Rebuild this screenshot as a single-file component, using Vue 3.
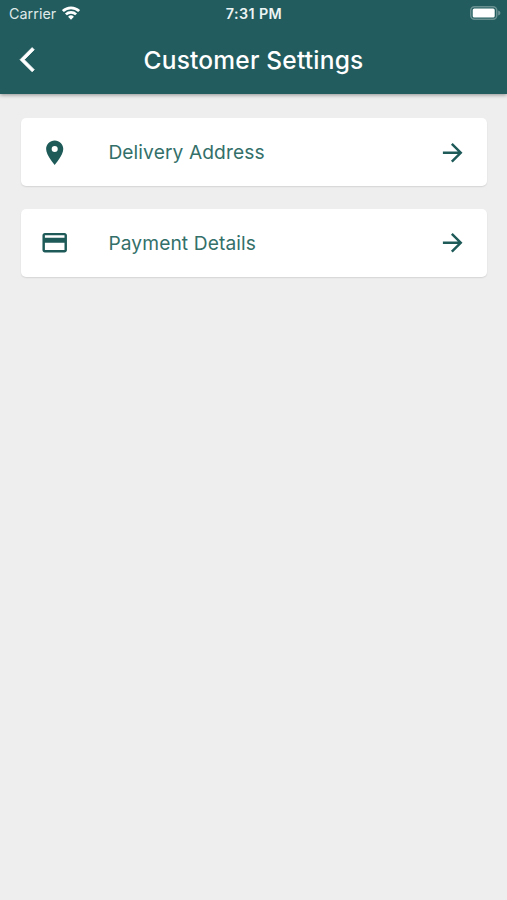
<script setup>
const items = [
  {
    label: 'Delivery Address',
    icon: 'M12 2C8.13 2 5 5.13 5 9c0 5.25 7 13 7 13s7-7.75 7-13c0-3.87-3.13-7-7-7zm0 9.5a2.5 2.5 0 0 1 0-5 2.5 2.5 0 0 1 0 5z',
  },
  {
    label: 'Payment Details',
    icon: 'M20 4H4c-1.11 0-1.99.89-1.99 2L2 18c0 1.11.89 2 2 2h16c1.11 0 2-.89 2-2V6c0-1.11-.89-2-2-2zm0 14H4v-6h16v6zm0-10H4V6h16v2z',
  },
]
</script>

<template>
  <div class="screen">
    <header class="header">
      <div class="status">
        <div class="carrier">
          <span>Carrier</span>
          <svg class="wifi" viewBox="0 0 18 14">
            <g fill="none" stroke="#fff" stroke-width="2.7">
              <path d="M.9 5.1a11.6 11.6 0 0 1 16.2 0" />
              <path d="M3.9 8.4a7.3 7.3 0 0 1 10.2 0" />
            </g>
            <path d="M9 13.7l-2.9-2.9a4.1 4.1 0 0 1 5.8 0z" fill="#fff" />
          </svg>
        </div>
        <time class="time">7:31 PM</time>
        <div class="power">
          <svg class="battery" viewBox="0 0 31 14">
            <rect x=".75" y=".75" width="26" height="12.5" rx="3.8" fill="none" stroke="#fff" stroke-opacity=".32" stroke-width="1.5" />
            <rect x="2.7" y="2.5" width="22" height="9" rx="1.6" fill="#fff" />
            <path d="M28.2 4.6c1.6.5 2.2 1.4 2.2 2.4s-.6 1.9-2.2 2.4z" fill="#fff" fill-opacity=".35" />
          </svg>
        </div>
      </div>
      <div class="bar">
        <button class="back" aria-label="Back">
          <svg viewBox="0 0 24 24"><path d="M11.67 3.87L9.9 2.1 0 12l9.9 9.9 1.77-1.77L3.54 12z" /></svg>
        </button>
        <h1>Customer Settings</h1>
      </div>
    </header>
    <main class="list">
      <a v-for="item in items" :key="item.label" class="card">
        <svg class="icon" viewBox="0 0 24 24"><path :d="item.icon" /></svg>
        <span class="label">{{ item.label }}</span>
        <svg class="icon" viewBox="0 0 24 24">
          <path d="M12 4l-1.41 1.41L16.17 11H4v2h12.17l-5.58 5.59L12 20l8-8z" />
        </svg>
      </a>
    </main>
  </div>
</template>

<style>
body {
  background: #eee;
}
</style>

<style scoped>
.screen {
  min-height: 900px;
  background: #eee;
  font-family: Inter, "Liberation Sans", sans-serif;
  color: #225c5c;
}
.header {
  height: 93.5px;
  box-sizing: border-box;
  background: #225c5e;
  color: #fff;
  box-shadow: 0 1px 4px rgba(0, 0, 0, 0.4);
}
.status {
  display: grid;
  grid-template-columns: 1fr auto 1fr;
  align-items: center;
  height: 27px;
  padding: 0 6px 0 9px;
}
.carrier {
  display: flex;
  align-items: center;
  gap: 6px;
  font-size: 14.3px;
  letter-spacing: 0.05px;
  color: #dfe9e9;
}
.wifi {
  width: 18px;
  height: 14px;
  margin-bottom: 2px;
}
.time {
  font-size: 14.3px;
  font-weight: 600;
  letter-spacing: 0.42px;
  margin-right: 2px;
  color: #edf4f4;
}
.power {
  display: flex;
  justify-content: flex-end;
}
.battery {
  width: 31px;
  height: 14px;
  margin-bottom: 1px;
}
.bar {
  display: grid;
  grid-template-columns: 50px 1fr 50px;
  align-items: center;
  height: 65px;
}
.back {
  display: flex;
  padding: 0 0 0 20.2px;
  border: 0;
  background: none;
}
.back svg {
  width: 29.4px;
  height: 29.4px;
  flex: none;
  fill: #fff;
  stroke: #fff;
  stroke-width: 0.6px;
  overflow: visible;
}
h1 {
  margin: 0;
  text-align: center;
  white-space: nowrap;
  font-size: 24.5px;
  line-height: 30px;
  font-weight: 500;
  letter-spacing: 0.2px;
}
.list {
  display: flex;
  flex-direction: column;
  gap: 22.2px;
  padding: 24.7px 20px 0 21px;
}
.card {
  display: flex;
  align-items: center;
  height: 68.2px;
  padding: 0 19.5px 0 19px;
  border-radius: 5px;
  background: #fff;
  box-shadow: 0 1px 1.5px rgba(0, 0, 0, 0.11);
}
.icon {
  width: 29.4px;
  height: 29.4px;
  flex: none;
  fill: #1e5a58;
}
.label {
  flex: 1;
  padding-left: 39px;
  font-size: 19.2px;
  line-height: 26px;
  letter-spacing: 0.1px;
  color: #34706a;
}
</style>
